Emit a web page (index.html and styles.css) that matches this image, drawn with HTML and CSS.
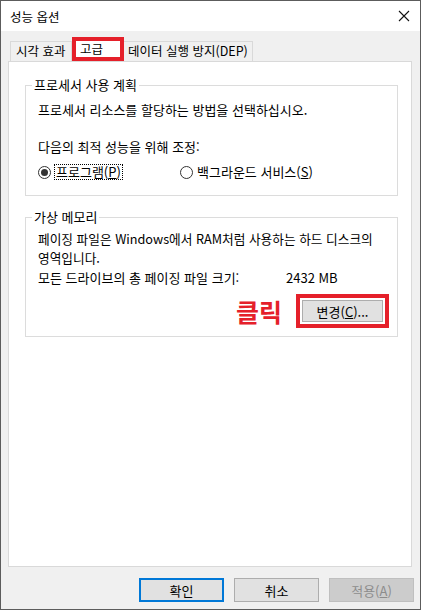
FILE: index.html
```html
<!DOCTYPE html>
<html lang="ko">
<head>
    <meta charset="UTF-8">
    <title>성능 옵션</title>
    <link rel="stylesheet" href="styles.css">
</head>
<body>

<div class="window">
    <div class="titlebar">
        <div class="title">성능 옵션</div>
        <svg class="close-icon" width="12" height="12" viewBox="0 0 12 12">
            <path d="M1 1 L11 11 M11 1 L1 11" stroke="#111" stroke-width="1.1" fill="none"/>
        </svg>
    </div>

    <div class="tabs">
        <div class="tab">시각 효과</div>
        <div class="tab tab-active">고급</div>
        <div class="tab tab-wide">데이터 실행 방지(DEP)</div>
    </div>

    <div class="panel">
        <!-- 프로세서 사용 계획 -->
        <fieldset class="group group-cpu">
            <legend>프로세서 사용 계획</legend>
            <div class="group-body">
                <p>프로세서 리소스를 할당하는 방법을 선택하십시오.</p>
                <p class="adjust-label">다음의 최적 성능을 위해 조정:</p>
                <div class="radio-row">
                    <div class="radio-item radio-first">
                        <span class="radio checked"></span>
                        <span class="focus-label">프로그램(<u>P</u>)</span>
                    </div>
                    <div class="radio-item">
                        <span class="radio"></span>
                        <span class="plain-label">백그라운드 서비스(<u>S</u>)</span>
                    </div>
                </div>
            </div>
        </fieldset>

        <!-- 가상 메모리 -->
        <fieldset class="group group-memory">
            <legend>가상 메모리</legend>
            <div class="group-body">
                <div class="desc">
                    <p>페이징 파일은 Windows에서 RAM처럼 사용하는 하드 디스크의</p>
                    <p>영역입니다.</p>
                </div>
                <div class="size-row">
                    <span class="size-label">모든 드라이브의 총 페이징 파일 크기:</span>
                    <span>2432 MB</span>
                </div>
                <div class="change-row">
                    <span class="click-note">클릭</span>
                    <div class="highlight">
                        <button class="btn btn-change">변경(<u>C</u>)...</button>
                    </div>
                </div>
            </div>
        </fieldset>
    </div>

    <div class="footer">
        <button class="btn btn-default">확인</button>
        <button class="btn">취소</button>
        <button class="btn btn-disabled">적용(<u>A</u>)</button>
    </div>
</div>

</body>
</html>
```

FILE: styles.css
```css
body {
    margin: 0;
    padding: 0;
    font-family: "Noto Sans CJK KR", "Noto Sans", sans-serif;
    font-size: 13px;
    color: #000;
    background: #fff;
}

p {
    margin: 0;
    line-height: 17px;
}

.window {
    width: 421px;
    height: 610px;
    box-sizing: border-box;
    border: 1px solid #5c5c5c;
    background-color: #f0f0f0;
    display: flex;
    flex-direction: column;
}

.titlebar {
    height: 30px;
    background-color: #fff;
    display: flex;
    align-items: center;
    justify-content: space-between;
    padding: 0 9px 0 9px;
}

.title {
    font-size: 12.5px;
}

.close-icon {
    margin-right: 1px;
}

.tabs {
    display: flex;
    align-items: flex-end;
    height: 24px;
    margin-top: 6px;
    padding-left: 9px;
}

.tab {
    height: 20px;
    box-sizing: border-box;
    border: 1px solid #d9d9d9;
    border-bottom: none;
    display: flex;
    align-items: center;
    padding-left: 5px;
    width: 62px;
    line-height: 1;
    white-space: nowrap;
    font-size: 12.5px;
}

.tab-active {
    width: 52px;
    height: 24px;
    border: 4px solid #e5202a;
    background-color: #fff;
    padding-left: 4px;
}

.tab-wide {
    width: 129px;
    border-left: none;
    padding-left: 4px;
}

.panel {
    height: 506px;
    box-sizing: border-box;
    margin: 0 8px 0 7px;
    border: 1px solid #d9d9d9;
    background-color: #fff;
    padding-top: 15px;
}

.group {
    margin: 0 13px 0 16px;
    padding: 0;
    border: 1px solid #dcdcdc;
    min-inline-size: 0;
}

.group legend {
    margin-left: 6px;
    padding: 0 2px;
    line-height: 16px;
}

.group-body {
    padding: 8px 8px 14px 12px;
}

.adjust-label {
    margin-top: 20px;
}

.radio-row {
    display: flex;
    align-items: center;
    height: 18px;
    margin-top: 8px;
}

.radio-item {
    display: flex;
    align-items: center;
}

.radio-first {
    width: 142px;
}

.radio {
    width: 11px;
    height: 11px;
    border: 1px solid #333;
    border-radius: 50%;
    box-sizing: content-box;
    display: flex;
    align-items: center;
    justify-content: center;
    margin-right: 3px;
}

.radio.checked::after {
    content: "";
    width: 7px;
    height: 7px;
    border-radius: 50%;
    background-color: #333;
}

.focus-label {
    border: 1px dotted #000;
    padding: 0 1px;
    line-height: 14px;
}

.plain-label {
    padding: 0 2px 0 1px;
    line-height: 14px;
}

.group-memory {
    margin-top: 13px;
}

.group-memory .group-body {
    padding: 5px 8px 8px 12px;
}

.desc p {
    font-size: 12.7px;
    line-height: 18.5px;
}

.size-row {
    display: flex;
    line-height: 17px;
    margin-top: 2px;
}

.size-label {
    width: 248px;
}

.change-row {
    display: flex;
    justify-content: flex-end;
    align-items: center;
    margin-top: 8px;
}

.click-note {
    color: #e5202a;
    font-size: 25px;
    font-weight: bold;
    line-height: 28px;
    margin-right: 14px;
}

.highlight {
    border: 4px solid #e5202a;
    padding: 2px;
    display: flex;
}

.btn {
    font-family: "Noto Sans CJK KR", "Noto Sans", sans-serif;
    font-size: 13px;
    color: #000;
    background-color: #e1e1e1;
    border: 1px solid #adadad;
    width: 85px;
    height: 24px;
    padding: 0;
    margin: 0;
    line-height: 1;
}

.btn-change {
    width: 81px;
    height: 22px;
}

.footer {
    display: flex;
    justify-content: flex-end;
    gap: 10px;
    margin-top: 11px;
    padding-right: 6px;
}

.btn-default {
    border: 2px solid #0078d7;
}

.btn-disabled {
    background-color: #cccccc;
    border-color: #bfbfbf;
    color: #8c8c8c;
}
```
